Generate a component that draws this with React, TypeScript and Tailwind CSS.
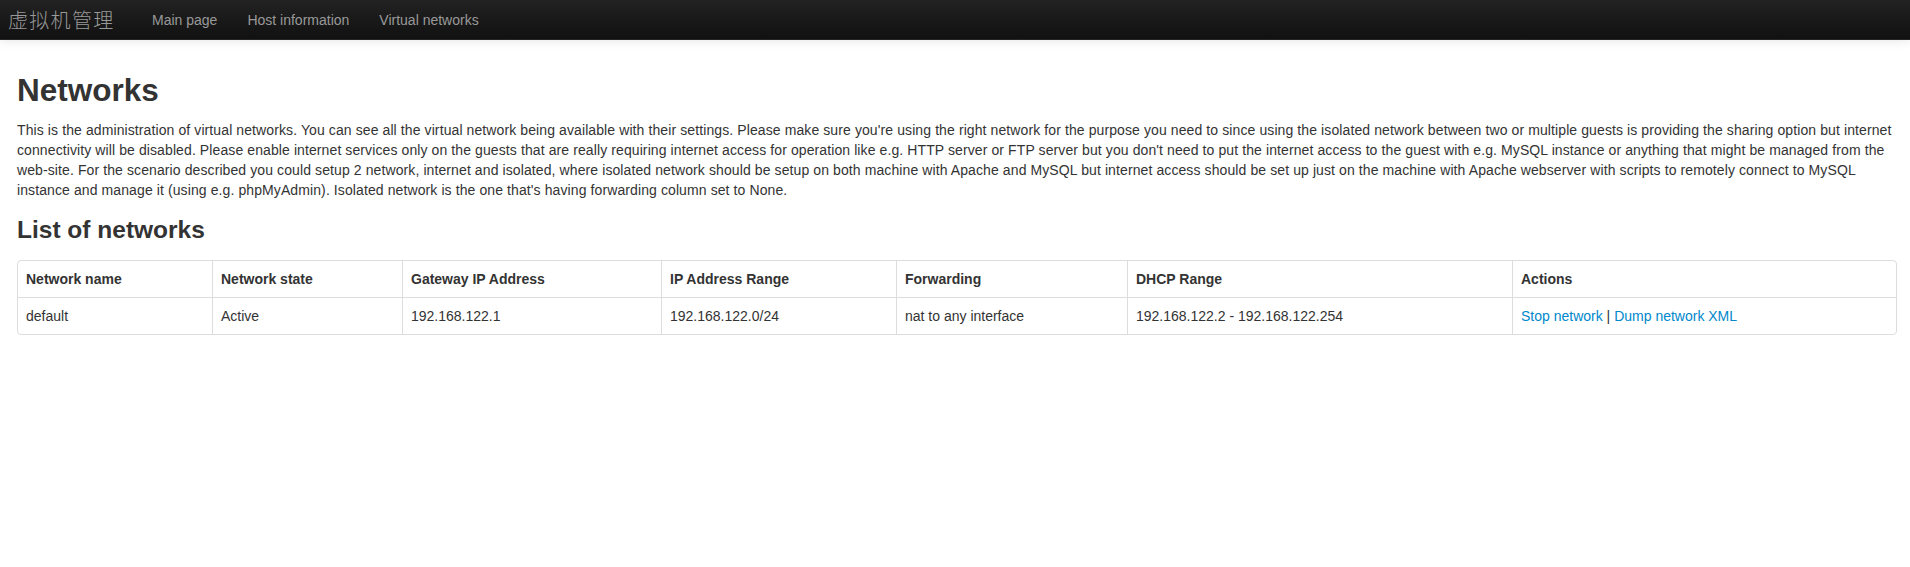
import React from "react";

const font = { fontFamily: '"Liberation Sans", Arial, Helvetica, sans-serif' };

export default function App() {
  const cols = [
    { h: "Network name", w: "w-[194px]" },
    { h: "Network state", w: "w-[190px]" },
    { h: "Gateway IP Address", w: "w-[259px]" },
    { h: "IP Address Range", w: "w-[235px]" },
    { h: "Forwarding", w: "w-[231px]" },
    { h: "DHCP Range", w: "w-[385px]" },
    { h: "Actions", w: "w-auto" },
  ];
  const row = ["default", "Active", "192.168.122.1", "192.168.122.0/24", "nat to any interface", "192.168.122.2 - 192.168.122.254"];
  return (
    <div className="min-h-[567px] bg-white text-[14px] leading-[20px] text-[#333]" style={font}>
      <div className="relative z-10 flex h-[40px] items-stretch border-b border-[#252525] bg-gradient-to-b from-[#222222] to-[#111111] shadow-[0_1px_10px_rgba(0,0,0,0.1)]">
        <div
          className="flex w-[137px] items-center pl-[8px] text-[20px] font-light leading-[20px] text-[#999] tracking-[1.3px]"
          style={{ fontFamily: '"Noto Sans CJK SC", "Liberation Sans", sans-serif' }}
        >
          虚拟机管理
        </div>
        {["Main page", "Host information", "Virtual networks"].map((t) => (
          <a key={t} className="flex items-center px-[15px] text-[14px] text-[#999]">
            {t}
          </a>
        ))}
      </div>
      <div className="pl-[17px] pr-[13px] pt-[20px]">
        <h1 className="my-[10px] text-[31.5px] font-bold leading-[40px] text-[#333]">Networks</h1>
        <p className="mb-[10px] tracking-[0.1px]">
          This is the administration of virtual networks. You can see all the virtual network being available with their settings. Please make sure you're using the right network for the purpose you need to since using the isolated network between two or multiple guests is providing the sharing option but internet connectivity will be disabled. Please enable internet services only on the guests that are really requiring internet access for operation like e.g. HTTP server or FTP server but you don't need to put the internet access to the guest with e.g. MySQL instance or anything that might be managed from the web-site. For the scenario described you could setup 2 network, internet and isolated, where isolated network should be setup on both machine with Apache and MySQL but internet access should be set up just on the machine with Apache webserver with scripts to remotely connect to MySQL instance and manage it (using e.g. phpMyAdmin). Isolated network is the one that's having forwarding column set to None.
        </p>
        <h3 className="my-[10px] text-[24.5px] font-bold leading-[40px] text-[#333]">List of networks</h3>
        <div className="overflow-hidden rounded-[4px] border border-[#ddd]">
          <table className="w-full table-fixed border-separate border-spacing-0">
            <thead>
              <tr>
                {cols.map((c, i) => (
                  <th
                    key={c.h}
                    className={`${c.w} p-[8px] text-left align-bottom font-bold leading-[20px] ${i > 0 ? "border-l border-[#ddd]" : ""}`}
                  >
                    {c.h}
                  </th>
                ))}
              </tr>
            </thead>
            <tbody>
              <tr>
                {row.map((v, i) => (
                  <td key={i} className={`border-t border-[#ddd] p-[8px] align-top leading-[20px] ${i > 0 ? "border-l" : ""}`}>
                    {v}
                  </td>
                ))}
                <td className="border-l border-t border-[#ddd] p-[8px] align-top leading-[20px]">
                  <a className="text-[#0088cc]">Stop network</a> | <a className="text-[#0088cc]">Dump network XML</a>
                </td>
              </tr>
            </tbody>
          </table>
        </div>
      </div>
    </div>
  );
}
